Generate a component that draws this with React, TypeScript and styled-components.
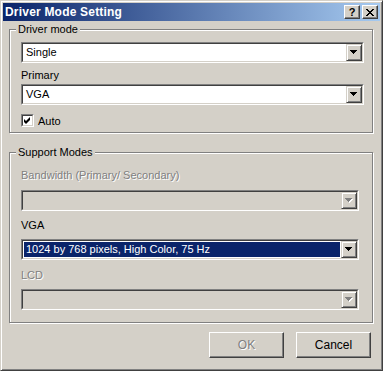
import styled, { createGlobalStyle } from "styled-components";

const GlobalStyle = createGlobalStyle`
  html, body {
    margin: 0;
    padding: 0;
    background: #d4d0c8;
  }
  body {
    font-family: "Liberation Sans", Arial, sans-serif;
    font-size: 11px;
    color: #000;
  }
`;

const Window = styled.div`
  width: 383px;
  height: 371px;
  box-sizing: border-box;
  background: #d4d0c8;
  border: 1px solid;
  border-color: #d4d0c8 #404040 #404040 #d4d0c8;
  box-shadow: inset 1px 1px #fff, inset -1px -1px #808080;
  padding: 2px;
  display: flex;
  flex-direction: column;
`;

const TitleBar = styled.div`
  height: 18px;
  display: flex;
  align-items: center;
  padding: 0 2px 0 2px;
  background: linear-gradient(to right, #0a246a, #a6caf0);
`;

const Title = styled.div`
  flex: 1;
  color: #fff;
  font-weight: bold;
  font-size: 12px;
  letter-spacing: 0.2px;
`;

const CaptionButtons = styled.div`
  display: flex;
  gap: 2px;
`;

const CaptionButton = styled.div`
  width: 16px;
  height: 14px;
  box-sizing: border-box;
  background: #d4d0c8;
  border: 1px solid;
  border-color: #fff #404040 #404040 #fff;
  box-shadow: inset -1px -1px #808080;
  display: flex;
  align-items: center;
  justify-content: center;
  font-weight: bold;
  font-size: 11px;
  line-height: 1;
  color: #000;
`;

const Body = styled.div`
  flex: 1;
  display: flex;
  flex-direction: column;
  padding: 0 7px 0 6px;
`;

const Group = styled.div<{ $top: number; $height: number }>`
  position: relative;
  margin-top: ${(p) => p.$top}px;
  height: ${(p) => p.$height}px;
  box-sizing: border-box;
  border: 1px solid #808080;
  box-shadow: 1px 1px 0 #fff, inset 1px 1px 0 #fff;
`;

const Legend = styled.div`
  position: absolute;
  top: -8px;
  left: 6px;
  padding: 0 2px;
  background: #d4d0c8;
  line-height: 14px;
`;

const GroupContent = styled.div<{ $padTop: number; $padRight: number }>`
  display: flex;
  flex-direction: column;
  padding: ${(p) => p.$padTop}px ${(p) => p.$padRight}px 0 11px;
`;

const Label = styled.div<{ $disabled?: boolean; $top: number }>`
  line-height: 13px;
  height: 13px;
  margin-top: ${(p) => p.$top}px;
  color: ${(p) => (p.$disabled ? "#808080" : "#000")};
  text-shadow: ${(p) => (p.$disabled ? "1px 1px 0 #fff" : "none")};
`;

const Field = styled.div<{ $top: number }>`
  margin-top: ${(p) => p.$top}px;
  height: 21px;
  box-sizing: border-box;
  border: 1px solid;
  border-color: #808080 #fff #fff #808080;
  display: flex;
`;

const FieldInner = styled.div<{ $disabled?: boolean }>`
  flex: 1;
  display: flex;
  border: 1px solid;
  border-color: #404040 #d4d0c8 #d4d0c8 #404040;
  background: ${(p) => (p.$disabled ? "#d4d0c8" : "#fff")};
`;

const FieldText = styled.div<{ $selected?: boolean }>`
  flex: 1;
  margin: 1px;
  padding-left: 2px;
  line-height: 15px;
  white-space: nowrap;
  overflow: hidden;
  background: ${(p) => (p.$selected ? "#0a246a" : "transparent")};
  color: ${(p) => (p.$selected ? "#fff" : "#000")};
`;

const DropButton = styled.div`
  width: 16px;
  height: 17px;
  box-sizing: border-box;
  background: #d4d0c8;
  border: 1px solid;
  border-color: #d4d0c8 #404040 #404040 #d4d0c8;
  box-shadow: inset 1px 1px #fff, inset -1px -1px #808080;
  display: flex;
  align-items: center;
  justify-content: center;
`;

const CheckRow = styled.label`
  display: flex;
  align-items: center;
  gap: 4px;
  margin-top: 9px;
  height: 13px;
`;

const CheckBox = styled.div`
  width: 13px;
  height: 13px;
  box-sizing: border-box;
  border: 1px solid;
  border-color: #808080 #fff #fff #808080;
  display: flex;
`;

const CheckInner = styled.div`
  flex: 1;
  background: #fff;
  border: 1px solid;
  border-color: #404040 #d4d0c8 #d4d0c8 #404040;
  display: flex;
  align-items: center;
  justify-content: center;
`;

const ButtonRow = styled.div`
  display: flex;
  justify-content: flex-end;
  gap: 12px;
  margin-top: 9px;
  padding-right: 2px;
`;

const Button = styled.div<{ $disabled?: boolean }>`
  width: 75px;
  height: 26px;
  box-sizing: border-box;
  border: 1px solid;
  border-color: #fff #404040 #404040 #fff;
  box-shadow: inset -1px -1px #808080;
  display: flex;
  align-items: center;
  justify-content: center;
  font-size: 12px;
  color: ${(p) => (p.$disabled ? "#808080" : "#000")};
  text-shadow: ${(p) => (p.$disabled ? "1px 1px 0 #fff" : "none")};
`;

const Arrow = ({ disabled }: { disabled?: boolean }) => (
  <svg width="8" height="5" viewBox="0 0 8 5">
    {disabled && <path d="M1 1h7v1h-1v1h-1v1h-1v1h-1v-1h-1v-1h-1v-1h-1z" fill="#fff" />}
    <path d="M0 0h7v1h-1v1h-1v1h-1v1h-1v-1h-1v-1h-1v-1h-1z" fill={disabled ? "#808080" : "#000"} />
  </svg>
);

const Combo = ({
  value,
  top,
  disabled,
  selected,
}: {
  value?: string;
  top: number;
  disabled?: boolean;
  selected?: boolean;
}) => (
  <Field $top={top}>
    <FieldInner $disabled={disabled}>
      <FieldText $selected={selected}>{value}</FieldText>
      <DropButton>
        <Arrow disabled={disabled} />
      </DropButton>
    </FieldInner>
  </Field>
);

const App = () => (
  <>
    <GlobalStyle />
    <Window>
      <TitleBar>
        <Title>Driver Mode Setting</Title>
        <CaptionButtons>
          <CaptionButton>?</CaptionButton>
          <CaptionButton>
            <svg width="8" height="7" viewBox="0 0 8 7">
              <path
                d="M0 0h2v1h1v1h2v-1h1v-1h2v1h-1v1h-1v1h-1v1h1v1h1v1h1v1h-2v-1h-1v-1h-2v1h-1v1h-2v-1h1v-1h1v-1h1v-1h-1v-1h-1v-1h-1z"
                fill="#000"
              />
            </svg>
          </CaptionButton>
        </CaptionButtons>
      </TitleBar>
      <Body>
        <Group $top={8} $height={104}>
          <Legend>Driver mode</Legend>
          <GroupContent $padTop={12} $padRight={8}>
            <Combo value="Single" top={0} />
            <Label $top={6}>Primary</Label>
            <Combo value="VGA" top={2} />
            <CheckRow>
              <CheckBox>
                <CheckInner>
                  <svg width="7" height="7" viewBox="0 0 7 7">
                    <path d="M6 0v3l-4 4l-2-2v-3l2 2z" fill="#000" />
                  </svg>
                </CheckInner>
              </CheckBox>
              Auto
            </CheckRow>
          </GroupContent>
        </Group>
        <Group $top={19} $height={171}>
          <Legend>Support Modes</Legend>
          <GroupContent $padTop={16} $padRight={13}>
            <Label $top={0} $disabled>
              Bandwidth (Primary/ Secondary)
            </Label>
            <Combo top={8} disabled />
            <Label $top={8}>VGA</Label>
            <Combo value="1024 by 768 pixels, High Color, 75 Hz" top={7} selected />
            <Label $top={9} $disabled>
              LCD
            </Label>
            <Combo top={7} disabled />
          </GroupContent>
        </Group>
        <ButtonRow>
          <Button $disabled>OK</Button>
          <Button>Cancel</Button>
        </ButtonRow>
      </Body>
    </Window>
  </>
);

export default App;
